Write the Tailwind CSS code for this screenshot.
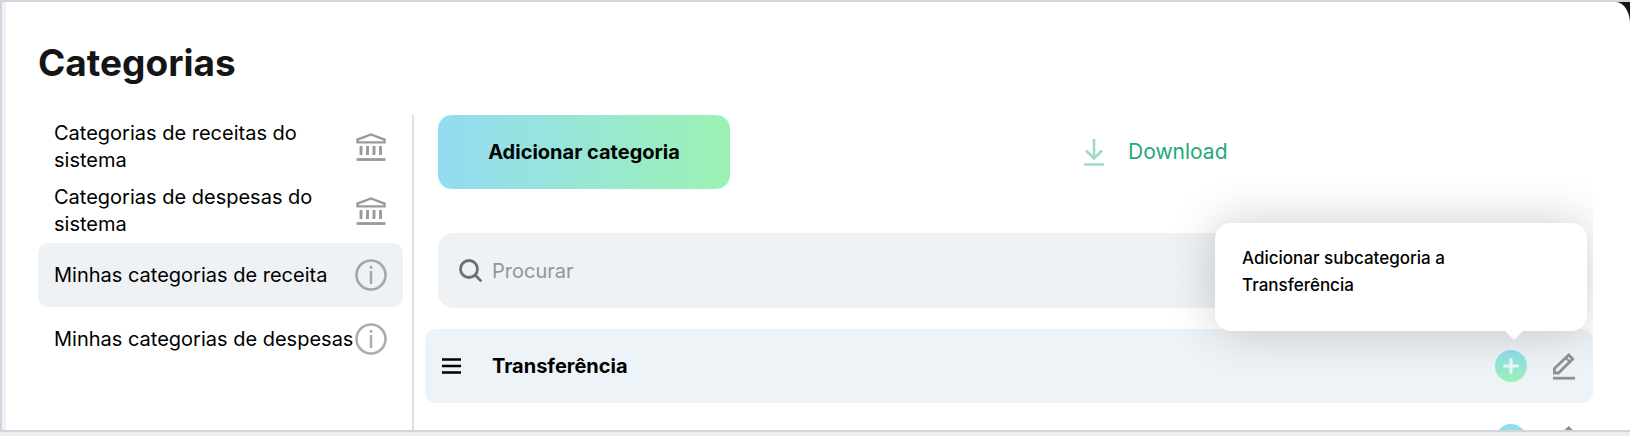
<!DOCTYPE html>
<html lang="pt-BR">
<head>
  <meta charset="UTF-8">
  <meta name="viewport" content="width=device-width, initial-scale=1.0">
  <title>Categorias</title>
  <script src="https://cdn.jsdelivr.net/npm/@tailwindcss/browser@4"></script>
</head>
<body class="flex h-screen flex-col overflow-hidden bg-[#ececf1] font-['Inter',sans-serif] text-black">
  <svg class="hidden">
    <symbol id="bank" viewBox="0 0 30 28">
      <path d="M1.500 9.400V6.600L15 1.500l13.500 5.100v2.800z" fill="none" stroke="currentColor" stroke-width="2.400"/>
      <path d="M5 13v9M11.500 13v9M18 13v9M24.500 13v9" stroke="currentColor" stroke-width="2.900"/>
      <path d="M.5 26.500h29" stroke="currentColor" stroke-width="2.800"/>
    </symbol>
    <symbol id="info" viewBox="0 0 32 32">
      <circle cx="16" cy="16" r="14.500" fill="none" stroke="currentColor" stroke-width="2.600"/>
      <circle cx="16" cy="8.300" r="1.500" fill="currentColor"/>
      <path d="M16 12v13" stroke="currentColor" stroke-width="2.500"/>
    </symbol>
    <symbol id="plus" viewBox="0 0 32 32">
      <path d="M16 9.500v13M9.500 16h13" stroke="#e9f5f5" stroke-width="3" stroke-linecap="round"/>
    </symbol>
    <symbol id="pencil" viewBox="0 0 22 27">
      <path d="M1.400 20v-4.500L15.700 1.900l4 4L5.500 20z" fill="none" stroke="currentColor" stroke-width="2.800"/>
      <path d="M12.500 4.500l4.500 4.500" stroke="currentColor" stroke-width="2.200"/>
      <path d="M0 25.200h22" stroke="currentColor" stroke-width="2.800"/>
    </symbol>
  </svg>

  <div class="mb-1 flex min-h-0 flex-1 overflow-hidden border-y-2 border-l-2 border-[#d3d5da] bg-[#141617]">
    <div class="flex flex-1 flex-col rounded-tr-[14px_22px] border-l-4 border-[#edf2f6] bg-white pl-8">
      <h1 class="pt-[38px] text-[37px] leading-[46px] font-bold text-[#151515]">Categorias</h1>

      <div class="mt-[29px] flex min-h-0 flex-1">
        <!-- Sidebar -->
        <nav class="flex w-[376px] shrink-0 flex-col border-r-2 border-[#dfe1e3] pr-[9px] text-[20px] leading-[27px]">
          <a href="#" class="flex h-16 shrink-0 items-center justify-between rounded-[10px] px-4">
            <span class="w-[260px]">Categorias de receitas do sistema</span>
            <svg class="mr-px h-7 w-[30px] shrink-0 text-[#999]"><use href="#bank"/></svg>
          </a>
          <a href="#" class="flex h-16 shrink-0 items-center justify-between rounded-[10px] px-4">
            <span class="w-[260px]">Categorias de despesas do sistema</span>
            <svg class="mr-px h-7 w-[30px] shrink-0 text-[#999]"><use href="#bank"/></svg>
          </a>
          <a href="#" class="flex h-16 shrink-0 items-center justify-between rounded-[10px] bg-[#eef2f5] px-4">
            <span class="whitespace-nowrap">Minhas categorias de receita</span>
            <svg class="size-8 shrink-0 text-[#a4a6a7]"><use href="#info"/></svg>
          </a>
          <a href="#" class="flex h-16 shrink-0 items-center justify-between rounded-[10px] px-4">
            <span class="whitespace-nowrap">Minhas categorias de despesas</span>
            <svg class="size-8 shrink-0 text-[#adadad]"><use href="#info"/></svg>
          </a>
        </nav>

        <!-- Content -->
        <main class="mr-[37px] ml-[11px] min-w-0 flex-1 overflow-hidden">
          <div class="mx-[13px] flex items-center">
            <button class="h-[74px] w-[292px] rounded-[14px] bg-linear-to-r from-[#93dbf3] to-[#9cf2b1] text-[20px] font-bold">Adicionar categoria</button>
            <a href="#" class="ml-[31%] flex items-center gap-6 text-[21px] leading-7 text-[#1fa97c]">
              <svg class="h-[27px] w-5 text-[#a0dac6]" viewBox="0 0 20 27" fill="none" stroke="currentColor" stroke-width="2.600">
                <path d="M10 0v19M2 11.500l8 8 8-8M0 25.500h20"/>
              </svg>
              Download
            </a>
          </div>

          <label class="mx-[13px] mt-11 flex h-[75px] items-center gap-[10px] rounded-[15px] bg-[#eef2f5] pl-[21px]">
            <svg class="size-[23px]" viewBox="0 0 23 23" fill="none" stroke="#6d6f70" stroke-width="2.800" stroke-linecap="round">
              <circle cx="10" cy="10" r="8.500"/>
              <path d="M16.500 16.500l5 5"/>
            </svg>
            <input type="text" placeholder="Procurar" aria-label="Procurar" class="flex-1 bg-transparent pt-px text-[20px] outline-none placeholder:text-[#939698]">
          </label>

          <ul class="mt-[21px]">
            <li class="flex h-[74px] items-center rounded-[11px] bg-[#edf3f7] pr-[18px] pl-[17px]">
              <svg class="h-4 w-[19px]" viewBox="0 0 19 16" stroke="#000" stroke-width="2.600">
                <path d="M0 1.500h19M0 8h19M0 14.500h19"/>
              </svg>
              <span class="ml-[31px] flex-1 text-[20px] font-bold">Transferência</span>
              <div class="relative">
                <div role="tooltip" class="absolute -right-[60px] bottom-full mb-[19px] h-[108px] w-[372px] rounded-[16px] bg-white px-[27px] pt-[22px] text-[17px] leading-[27px] font-medium shadow-[0_0_50px_rgba(0,0,0,0.2)]">
                  <p class="w-[240px]">Adicionar subcategoria a Transferência</p>
                  <svg class="absolute top-full right-16 h-[9px] w-[18px]" viewBox="0 0 18 9"><path d="M0 0h18L9 9z" fill="#fff"/></svg>
                </div>
                <button aria-label="Adicionar subcategoria" class="relative block size-8 rounded-full bg-linear-to-b from-[#8cd6eb] to-[#9cf2b1]">
                  <svg class="size-8"><use href="#plus"/></svg>
                </button>
              </div>
              <button aria-label="Editar" class="relative ml-[26px] text-[#8d9092]">
                <svg class="h-[27px] w-[22px]"><use href="#pencil"/></svg>
              </button>
            </li>
            <li class="flex h-[73px] items-center justify-end pr-[18px]">
              <button aria-label="Adicionar subcategoria" class="size-8 rounded-full bg-linear-to-b from-[#8fdcf2] to-[#9cf2b1]">
                <svg class="size-8"><use href="#plus"/></svg>
              </button>
              <button aria-label="Editar" class="ml-[26px] text-[#8d9092]">
                <svg class="h-[27px] w-[22px]"><use href="#pencil"/></svg>
              </button>
            </li>
          </ul>
        </main>
      </div>
    </div>
  </div>
</body>
</html>
